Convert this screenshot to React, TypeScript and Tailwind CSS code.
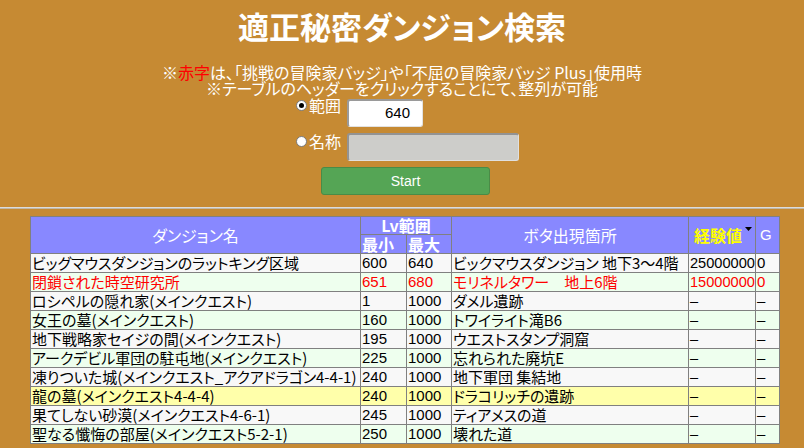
import React from 'react';

type Row = {
  name: string;
  min: string;
  max: string;
  place: string;
  exp: string;
  g: string;
  red?: boolean;
  yellow?: boolean;
};

const rows: Row[] = [
  { name: 'ビッグマウスダンジョンのラットキング区域', min: '600', max: '640', place: 'ビックマウスダンジョン 地下3～4階', exp: '25000000', g: '0' },
  { name: '閉鎖された時空研究所', min: '651', max: '680', place: 'モリネルタワー　地上6階', exp: '15000000', g: '0', red: true },
  { name: 'ロシペルの隠れ家(メインクエスト)', min: '1', max: '1000', place: 'ダメル遺跡', exp: '–', g: '–' },
  { name: '女王の墓(メインクエスト)', min: '160', max: '1000', place: 'トワイライト滝B6', exp: '–', g: '–' },
  { name: '地下戦略家セイジの間(メインクエスト)', min: '195', max: '1000', place: 'ウエストスタンプ洞窟', exp: '–', g: '–' },
  { name: 'アークデビル軍団の駐屯地(メインクエスト)', min: '225', max: '1000', place: '忘れられた廃坑E', exp: '–', g: '–' },
  { name: '凍りついた城(メインクエスト_アクアドラゴン4-4-1)', min: '240', max: '1000', place: '地下軍団 集結地', exp: '–', g: '–' },
  { name: '龍の墓(メインクエスト4-4-4)', min: '240', max: '1000', place: 'ドラコリッチの遺跡', exp: '–', g: '–', yellow: true },
  { name: '果てしない砂漠(メインクエスト4-6-1)', min: '245', max: '1000', place: 'ティアメスの道', exp: '–', g: '–' },
  { name: '聖なる懺悔の部屋(メインクエスト5-2-1)', min: '250', max: '1000', place: '壊れた道', exp: '–', g: '–' },
];

const Radio: React.FC<{ checked?: boolean }> = ({ checked }) => (
  <span className="w-[11px] h-[11px] rounded-full bg-white border border-[#7a7a7a] flex items-center justify-center shrink-0">
    {checked && <span className="w-[5px] h-[5px] rounded-full bg-black" />}
  </span>
);

const cell = 'border border-[#808080] px-[1px] whitespace-nowrap overflow-hidden';
const num = "border border-[#808080] px-[1px] whitespace-nowrap overflow-hidden font-['Liberation_Sans',sans-serif]";
const expCell = "border border-[#808080] pl-[1px] pr-0 whitespace-nowrap overflow-hidden text-[14.6px] font-['Liberation_Sans',sans-serif]";

const App: React.FC = () => {
  return (
    <div className="w-[804px] h-[448px] overflow-hidden bg-[#c68a33] font-['Noto_Sans_CJK_JP',sans-serif] [font-feature-settings:'palt']">
      {/* Title */}
      <h1 className="pt-[6px] text-center text-white font-bold text-[31px] leading-[40px]">
        適正秘密ダンジョン検索
      </h1>

      {/* Notes */}
      <div className="mt-[18px] text-center text-white text-[16px] leading-[16px]">
        <p>
          ※<span className="text-[#ff0000]">赤字</span>は、「挑戦の冒険家バッジ」や「不屈の冒険家バッジ Plus」使用時
        </p>
        <p>※テーブルのヘッダーをクリックすることにて、整列が可能</p>
      </div>

      {/* Search form */}
      <div className="mt-[3px] ml-[296px] flex flex-col gap-[6px]">
        <div className="flex items-start">
          <div className="flex items-center gap-[2px] w-[51px] -mt-[2px] h-[16px]">
            <Radio checked />
            <span className="text-white text-[16px] leading-[16px]">範囲</span>
          </div>
          <div className="w-[76px] h-[28px] bg-white rounded-[3px] border-t-2 border-l-2 border-b border-r border-t-[#9a9a9a] border-l-[#9a9a9a] border-b-[#e2e2e2] border-r-[#e2e2e2] flex items-center justify-end pr-[12px] text-[15px] text-black font-['Liberation_Sans',sans-serif]">
            640
          </div>
        </div>
        <div className="flex items-start">
          <div className="flex items-center gap-[2px] w-[51px] h-[16px]">
            <Radio />
            <span className="text-white text-[16px] leading-[16px]">名称</span>
          </div>
          <div className="w-[172px] h-[28px] bg-[#cdcdca] rounded-[3px] border-t-2 border-l-2 border-b border-r border-t-[#939393] border-l-[#939393] border-b-[#e0e0e0] border-r-[#e0e0e0]" />
        </div>
        <button className="ml-[25px] w-[169px] h-[28px] bg-[#55a555] border border-[#4a8b47] rounded-[3px] text-white text-[14px] font-['Liberation_Sans',sans-serif] flex items-center justify-center">
          Start
        </button>
      </div>

      {/* Separator */}
      <div className="mt-[12px] border-t border-t-[#dcdcdc] border-b border-b-[#c0b8a8]" />

      {/* Result table */}
      <table className="mt-[7px] ml-[30px] w-[749px] table-fixed border-collapse border border-[#333333] text-[15px] leading-[18px] text-black">
        <colgroup>
          <col className="w-[330px]" />
          <col className="w-[46px]" />
          <col className="w-[45px]" />
          <col className="w-[237px]" />
          <col className="w-[67px]" />
          <col className="w-[24px]" />
        </colgroup>
        <thead className="bg-[#8888ff] text-white">
          <tr className="h-[18px]">
            <th rowSpan={2} className="border border-[#808080] font-normal text-[16px]">ダンジョン名</th>
            <th colSpan={2} className="border border-[#808080] font-bold text-[16px] leading-[17px]">Lv範囲</th>
            <th rowSpan={2} className="border border-[#808080] font-normal text-[16px]">ボタ出現箇所</th>
            <th rowSpan={2} className="relative border border-[#808080] font-bold text-[16px] text-[#ffff00] text-left pl-[5px]">
              経験値
              <svg className="absolute right-[3px] top-[10px]" width="7" height="4" viewBox="0 0 7 4">
                <polygon points="0,0 7,0 3.5,4" fill="#000" />
              </svg>
            </th>
            <th rowSpan={2} className="border border-[#808080] font-normal text-[15px] text-left pl-[4px] font-['Liberation_Sans',sans-serif]">G</th>
          </tr>
          <tr className="h-[19px]">
            <th className="border border-[#808080] font-bold text-[16px] text-left pl-[1px]">最小</th>
            <th className="border border-[#808080] font-bold text-[16px] text-left pl-[1px]">最大</th>
          </tr>
        </thead>
        <tbody>
          {rows.map((r, i) => {
            const bg = r.yellow ? 'bg-[#ffffaa]' : i % 2 === 0 ? 'bg-[#f8f8f8]' : 'bg-[#eeffee]';
            const color = r.red ? 'text-[#ff0000]' : 'text-black';
            return (
              <tr key={i} className={`h-[19px] ${bg} ${color}`}>
                <td className={cell}>{r.name}</td>
                <td className={num}>{r.min}</td>
                <td className={num}>{r.max}</td>
                <td className={cell}>{r.place}</td>
                <td className={expCell}>{r.exp}</td>
                <td className={num}>{r.g}</td>
              </tr>
            );
          })}
        </tbody>
      </table>
    </div>
  );
};

export default App;
